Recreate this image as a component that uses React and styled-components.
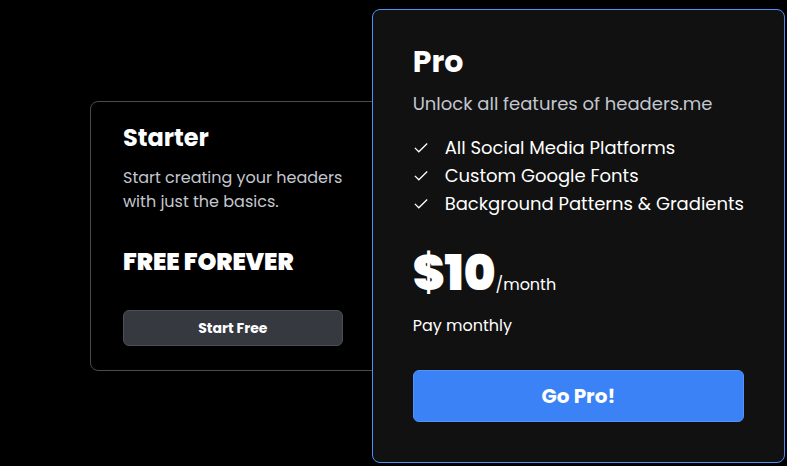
import styled, { createGlobalStyle } from 'styled-components';

const features = [
    'All Social Media Platforms',
    'Custom Google Fonts',
    'Background Patterns & Gradients',
];

export default function App() {
    return (
        <>
            <GlobalStyle />
            <Plans>
                <StarterCard>
                    <Title>Starter</Title>
                    <Description>Start creating your headers with just the basics.</Description>
                    <Free>FREE FOREVER</Free>
                    <Button type="button">Start Free</Button>
                </StarterCard>

                <ProCard>
                    <Title $large>Pro</Title>
                    <Description $large>Unlock all features of headers.me</Description>
                    <Features>
                        {features.map((feature) => (
                            <Feature key={feature}>
                                <Check />
                                {feature}
                            </Feature>
                        ))}
                    </Features>
                    <Price>
                        <Amount>$10</Amount>
                        <span>/month</span>
                    </Price>
                    <Billing>Pay monthly</Billing>
                    <Button type="button" $primary>Go Pro!</Button>
                </ProCard>
            </Plans>
        </>
    );
}

function Check() {
    return (
        <svg width="16" height="16" viewBox="0 0 16 16" fill="none" stroke="currentColor" strokeWidth="1.3" aria-hidden="true">
            <path d="M1.9 7.9 L5.8 11.8 L14.2 3.5" />
        </svg>
    );
}

const GlobalStyle = createGlobalStyle`
    * {
        box-sizing: border-box;
    }

    body {
        margin: 0;
        background: #000;
        color: #fff;
        font-family: Poppins, Inter, sans-serif;
        font-size: 16px;
        line-height: 24px;
    }

    h2, p, ul {
        margin: 0;
        padding: 0;
    }
`;

const Plans = styled.main`
    display: grid;
    grid-template-columns: 282fr 413fr;
    align-items: center;
    padding: 9px 2px 3px 90px;
`;

/* the right side is tucked under the pro card */
const StarterCard = styled.section`
    display: flex;
    flex-direction: column;
    margin-right: -12px;
    padding: 24px 40px 24px 32px;
    border: 1px solid #4b4b4d;
    border-radius: 8px;
`;

const ProCard = styled.section`
    position: relative;
    display: flex;
    flex-direction: column;
    padding: 36px 40px 40px;
    background: #111;
    border: 1px solid #4c8ff8;
    border-radius: 8px;
`;

const Title = styled.h2`
    font-size: ${({ $large }) => ($large ? '30px' : '24px')};
    line-height: ${({ $large }) => ($large ? '32px' : '24px')};
    font-weight: 700;
`;

const Description = styled.p`
    margin-top: ${({ $large }) => ($large ? '12px' : '16px')};
    color: #c3c7cf;
    font-size: ${({ $large }) => ($large ? '18px' : '16px')};
    line-height: ${({ $large }) => ($large ? '28px' : '24px')};
`;

const Features = styled.ul`
    margin-top: 16px;
    list-style: none;
`;

const Feature = styled.li`
    display: flex;
    align-items: center;
    gap: 16px;
    font-size: 18px;
    line-height: 28px;
    white-space: nowrap;
`;

const Free = styled.p`
    margin-top: 36px;
    font-size: 24px;
    font-weight: 900;
`;

const Price = styled.p`
    display: flex;
    align-items: baseline;
    margin-top: 32px;
`;

const Amount = styled.strong`
    font-size: 48px;
    line-height: 48px;
    font-weight: 900;
`;

const Billing = styled.p`
    margin-top: 16px;
`;

const Button = styled.button`
    height: ${({ $primary }) => ($primary ? '52px' : '36px')};
    margin-top: ${({ $primary }) => ($primary ? '32px' : '36px')};
    background: ${({ $primary }) => ($primary ? '#3b82f6' : '#363940')};
    border: 1px solid ${({ $primary }) => ($primary ? '#5591f7' : '#4b4e54')};
    border-radius: 6px;
    color: #fff;
    font-family: inherit;
    font-size: ${({ $primary }) => ($primary ? '20px' : '14px')};
    font-weight: 700;
    cursor: pointer;
`;
